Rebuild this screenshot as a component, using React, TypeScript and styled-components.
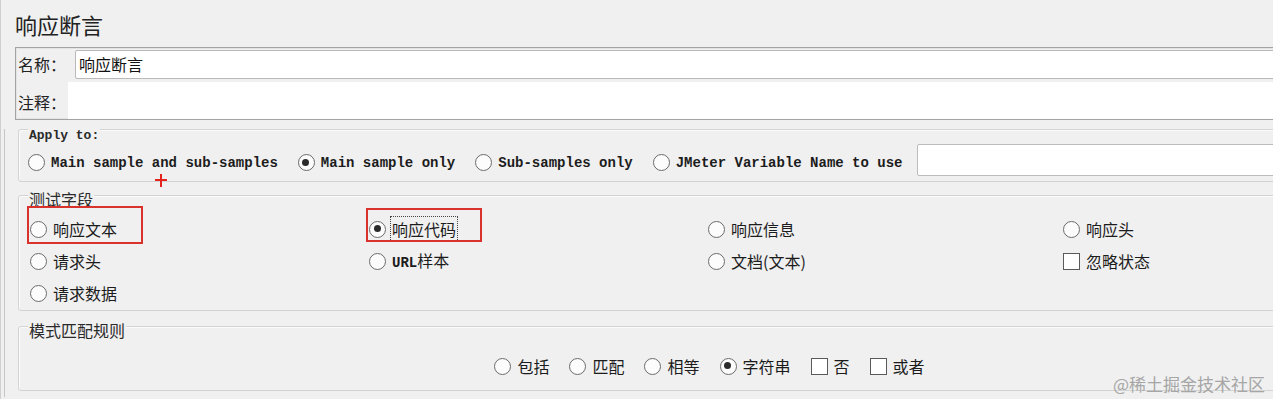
import styled, { createGlobalStyle } from "styled-components";

const cjk = `"Noto Sans CJK SC", "Noto Sans", sans-serif`;
const mono = `"Liberation Mono", "Noto Sans CJK SC", monospace`;

const GlobalStyle = createGlobalStyle`
  html, body {
    margin: 0;
    padding: 0;
    background: #f0f0f0;
    overflow: hidden;
  }
  body {
    font-family: ${cjk};
    color: #1e1e1e;
  }
`;

const Viewport = styled.div`
  position: relative;
  width: 1273px;
  height: 399px;
  overflow: hidden;
  border-left: 1px solid #cfcfcf;
  box-sizing: border-box;
`;

const Page = styled.div`
  width: 1400px;
  padding-top: 11px;
`;

const Title = styled.h1`
  margin: 0 0 0 14px;
  font: 400 22px/26px ${cjk};
  color: #222;
`;

const NamePanel = styled.section`
  margin: 10px 0 0 14px;
  border: 1px solid #a3a3a3;
  box-shadow: inset 0 0 0 1px #e4e4e4;
`;

const NameRow = styled.div<{ $h: number }>`
  display: flex;
  height: ${(p) => p.$h}px;
`;

const FieldLabel = styled.label<{ $w: number; $pt?: number }>`
  flex: 0 0 ${(p) => p.$w}px;
  display: flex;
  align-items: center;
  padding: ${(p) => p.$pt ?? 0}px 0 0 2px;
  box-sizing: border-box;
  font-size: 16px;
  color: #222;
`;

const NameInput = styled.div`
  flex: 1;
  margin-top: 2px;
  height: 29px;
  box-sizing: border-box;
  background: #fff;
  border: 1px solid #b9b9b9;
  border-radius: 2px;
  padding-left: 3px;
  font-size: 16px;
  line-height: 27px;
  color: #111;
`;

const CommentArea = styled.div`
  flex: 1;
  margin-top: 2px;
  background: #fff;
`;

const Frame = styled.div`
  margin: 2px 0 0 3px;
  border-left: 1px solid #c6c6c6;
  padding-bottom: 6px;
`;

const Group = styled.section<{ $mt: number; $pb: number }>`
  position: relative;
  margin: ${(p) => p.$mt}px 0 0 13px;
  padding-bottom: ${(p) => p.$pb}px;
  border: 1px solid #d3d3d3;
  border-radius: 3px;
  box-shadow: inset 1px 1px 0 #fbfbfb;
`;

const Legend = styled.div<{ $mono?: boolean }>`
  width: fit-content;
  margin: ${(p) => (p.$mono ? "-2px" : "-6px")} 0 0 9px;
  padding: 0 1px;
  background: #f0f0f0;
  font: 400 ${(p) => (p.$mono ? "13px/16px" : "16px/18px")}
    ${(p) => (p.$mono ? mono : cjk)};
  font-weight: ${(p) => (p.$mono ? 700 : 400)};
  color: #2a2a2a;
`;

const ApplyRow = styled.div`
  display: flex;
  align-items: center;
  gap: 20px;
  height: 32px;
  padding-left: 9px;

  & > span {
    margin-top: 5px;
  }
`;

const VarInput = styled.div`
  flex: 1;
  height: 32px;
  margin-left: -6px;
  box-sizing: border-box;
  background: #fff;
  border: 1px solid #bcbcbc;
  border-radius: 2px;
`;

const FieldGrid = styled.div`
  display: grid;
  grid-template-columns: 339px 339px 355px 1fr;
  grid-auto-rows: 32px;
  margin-top: 5px;
  padding-left: 11px;
`;

const ModeRow = styled.div`
  display: flex;
  justify-content: center;
  align-items: center;
  gap: 20px;
  height: 32px;
  margin-top: 11px;
`;

const Item = styled.span<{ $mono?: boolean }>`
  position: relative;
  display: inline-flex;
  align-items: center;
  gap: 6px;
  font-family: ${(p) => (p.$mono ? mono : cjk)};
  font-size: ${(p) => (p.$mono ? "14px" : "16px")};
  font-weight: ${(p) => (p.$mono ? 700 : 400)};
  color: #1c1c1c;
  white-space: nowrap;
`;

const Text = styled.span<{ $focus?: boolean }>`
  line-height: 22px;
  outline: ${(p) => (p.$focus ? "1px dotted #444" : "none")};
  outline-offset: 1px;
`;

const MonoBit = styled.span`
  font-family: ${mono};
  font-size: 14px;
  font-weight: 700;
`;

const Radio = styled.span<{ $checked?: boolean }>`
  position: relative;
  flex: 0 0 17px;
  width: 17px;
  height: 17px;
  box-sizing: border-box;
  border: 1.5px solid #6b6b6b;
  border-radius: 50%;
  background: #fcfcfc;

  &::after {
    content: "";
    display: ${(p) => (p.$checked ? "block" : "none")};
    position: absolute;
    left: 3.5px;
    top: 3.5px;
    width: 7px;
    height: 7px;
    border-radius: 50%;
    background: #2b2b2b;
  }
`;

const Check = styled.span`
  flex: 0 0 17px;
  width: 17px;
  height: 17px;
  box-sizing: border-box;
  border: 1.5px solid #5a5a5a;
  background: #fff;
`;

const Mark = styled.span<{ $top: number; $h: number }>`
  position: absolute;
  left: -3px;
  top: ${(p) => p.$top}px;
  width: 116px;
  height: ${(p) => p.$h}px;
  box-sizing: border-box;
  border: 2px solid #d9312b;
  pointer-events: none;
`;

const Plus = styled.span`
  position: absolute;
  left: 136px;
  top: 44px;
  width: 12px;
  height: 13px;

  &::before,
  &::after {
    content: "";
    position: absolute;
    background: #e3231c;
  }
  &::before {
    left: 0;
    top: 5px;
    width: 12px;
    height: 2px;
  }
  &::after {
    left: 5px;
    top: 0;
    width: 2px;
    height: 13px;
  }
`;

const Watermark = styled.div`
  position: absolute;
  right: 8px;
  bottom: 4px;
  font: 400 17px/22px ${cjk};
  color: #a6a6a6;
`;

type Opt = { label: React.ReactNode; kind?: "radio" | "check"; checked?: boolean };

function Option({ label, kind = "radio", checked, mono, focus }: Opt & { mono?: boolean; focus?: boolean }) {
  return (
    <Item $mono={mono}>
      {kind === "radio" ? <Radio $checked={checked} /> : <Check />}
      <Text $focus={focus}>{label}</Text>
    </Item>
  );
}

const modes: Opt[] = [
  { label: "包括" },
  { label: "匹配" },
  { label: "相等" },
  { label: "字符串", checked: true },
  { label: "否", kind: "check" },
  { label: "或者", kind: "check" },
];

export default function App() {
  return (
    <Viewport>
      <GlobalStyle />
      <Page>
        <Title>响应断言</Title>
        <NamePanel>
          <NameRow $h={32}>
            <FieldLabel $w={59}>名称：</FieldLabel>
            <NameInput>响应断言</NameInput>
          </NameRow>
          <NameRow $h={39}>
            <FieldLabel $w={52} $pt={4}>注释：</FieldLabel>
            <CommentArea />
          </NameRow>
        </NamePanel>

        <Frame>
          <Group $mt={9} $pb={5}>
            <Legend $mono>Apply to:</Legend>
            <ApplyRow>
              <Option mono label="Main sample and sub-samples" />
              <Option mono label="Main sample only" checked />
              <Option mono label="Sub-samples only" />
              <Option mono label="JMeter Variable Name to use" />
              <VarInput />
            </ApplyRow>
            <Plus />
          </Group>

          <Group $mt={13} $pb={1}>
            <Legend>测试字段</Legend>
            <FieldGrid>
              <Item>
                <Radio />
                <Text>响应文本</Text>
                <Mark $top={-7} $h={38} />
              </Item>
              <Item>
                <Radio $checked />
                <Text $focus>响应代码</Text>
                <Mark $top={-5} $h={34} />
              </Item>
              <Option label="响应信息" />
              <Option label="响应头" />
              <Option label="请求头" />
              <Option label={<><MonoBit>URL</MonoBit>样本</>} />
              <Option label="文档(文本)" />
              <Option label="忽略状态" kind="check" />
              <Option label="请求数据" />
            </FieldGrid>
          </Group>

          <Group $mt={15} $pb={8}>
            <Legend>模式匹配规则</Legend>
            <ModeRow>
              {modes.map((m) => (
                <Option key={String(m.label)} {...m} />
              ))}
            </ModeRow>
          </Group>
        </Frame>
      </Page>
      <Watermark>@稀土掘金技术社区</Watermark>
    </Viewport>
  );
}
